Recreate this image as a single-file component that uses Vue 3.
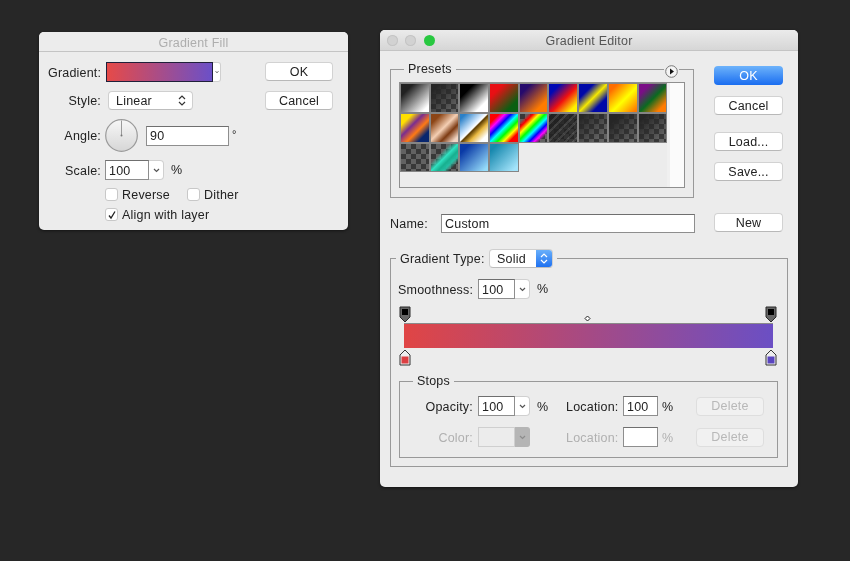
<script setup>
const check = 'conic-gradient(#626262 25%, #383838 0 50%, #626262 0 75%, #383838 0) 0 0 / 10px 10px'
const swatches = [
  'linear-gradient(135deg, #222 22%, #fff 88%)',
  `linear-gradient(135deg, #262626 15%, rgba(38,38,38,0) 90%), ${check}`,
  'linear-gradient(135deg, #000 25%, #fff 78%)',
  'linear-gradient(135deg, #e80f14 24%, #0a5f12 78%)',
  'linear-gradient(135deg, #260a6c 20%, #ff7b00 78%)',
  'linear-gradient(135deg, #0008b4 20%, #f01010 54%, #fff000 86%)',
  'linear-gradient(135deg, #0008a8 26%, #f5e800 50%, #0008a8 74%)',
  'linear-gradient(135deg, #ff6e00 15%, #ffff00 55%, #ff7a00 95%)',
  'linear-gradient(135deg, #7a0e86 20%, #0a6a20 52%, #ff7b00 84%)',
  'linear-gradient(135deg, #ffe000 20%, #7a2c90 40%, #ff7a14 60%, #08266e 80%)',
  'linear-gradient(135deg, #8c4516 18%, #f4cfb4 48%, #7c3a12 68%, #f2d6c4 90%)',
  'linear-gradient(135deg, #2a80c8 10%, #d8ecff 42%, #fff 48%, #5a3a00 52%, #e8b840 66%, #fff 86%)',
  'linear-gradient(135deg, #f00 16%, #f0f 27%, #00f 38%, #0ff 50%, #0f0 62%, #ff0 73%, #f00 84%)',
  `linear-gradient(135deg, rgba(255,0,0,0) 14%, #f00 24%, #ff0 35%, #0f0 46%, #0ff 56%, #00f 67%, #f0f 76%, rgba(255,0,255,0) 86%), ${check}`,
  `repeating-linear-gradient(135deg, rgba(120,120,120,.22) 0 2px, rgba(20,20,20,.35) 2px 6px), linear-gradient(135deg, #262626, rgba(38,38,38,.3)), ${check}`,
  `linear-gradient(135deg, #262626 10%, rgba(38,38,38,0) 80%), ${check}`,
  `linear-gradient(135deg, #262626 20%, rgba(38,38,38,0) 90%), ${check}`,
  `linear-gradient(135deg, #262626 15%, rgba(38,38,38,0) 85%), ${check}`,
  check,
  `linear-gradient(135deg, rgba(40,220,190,0) 34%, #30e0c0 50%, #18b090 62%, rgba(30,200,170,.9) 72%, rgba(30,200,170,0) 84%), ${check}`,
  'linear-gradient(135deg, #0a3aa6 18%, #96dcfa 92%)',
  'linear-gradient(135deg, #1788ae 14%, #a4e4fb 90%)',
]
</script>

<template>
  <main class="desktop">
    <!-- Gradient Fill -->
    <section class="window fill-window">
      <header class="titlebar fill-title">Gradient Fill</header>
      <div class="fill-body">
        <div class="fill-form">
          <div class="fill-row r-grad">
            <span class="lbl">Gradient:</span>
            <div class="grad-pick">
              <div class="grad-swatch"></div>
              <div class="grad-arrow">
                <svg width="4" height="4" viewBox="0 0 4 4"><path d="M.5 1 2 3l1.500-2" fill="none" stroke="#666" stroke-width=".8"/></svg>
              </div>
            </div>
          </div>
          <div class="fill-row r-style">
            <span class="lbl">Style:</span>
            <div class="select linear">
              <span>Linear</span>
              <svg class="updown" width="8" height="11" viewBox="0 0 8 11"><path d="M1 4 4 1l3 3M1 7l3 3 3-3" fill="none" stroke="#333" stroke-width="1.200"/></svg>
            </div>
          </div>
          <div class="fill-row r-angle">
            <span class="lbl">Angle:</span>
            <svg class="dial" width="33" height="33" viewBox="0 0 33 33">
              <defs>
                <linearGradient id="dialfill" x1="0" y1="0" x2="0" y2="1">
                  <stop offset="0" stop-color="#f7f7f7"/>
                  <stop offset="1" stop-color="#d6d6d6"/>
                </linearGradient>
              </defs>
              <circle cx="16.500" cy="16.500" r="15.800" fill="url(#dialfill)" stroke="#9a9a9a" stroke-width="1.200"/>
              <path d="M16.500 1.500V17" stroke="#9a9a9a" stroke-width="1"/>
              <circle cx="16.500" cy="16.500" r="1" fill="#777"/>
            </svg>
            <div class="field angle-field">90</div>
            <span class="degree">°</span>
          </div>
          <div class="fill-row r-scale">
            <span class="lbl">Scale:</span>
            <div class="combo">
              <div class="field combo-field scale-field">100</div>
              <div class="combo-drop">
                <svg width="7" height="5" viewBox="0 0 7 5"><path d="M1 1l2.500 2.500L6 1" fill="none" stroke="#555" stroke-width="1.200"/></svg>
              </div>
            </div>
            <span class="pct">%</span>
          </div>
          <div class="checks r-checks">
            <label class="chk chk-reverse"><span class="box"></span><span class="chk-text">Reverse</span></label>
            <label class="chk"><span class="box"></span><span class="chk-text">Dither</span></label>
          </div>
          <div class="checks r-align">
            <label class="chk">
              <span class="box">
                <svg width="10" height="10" viewBox="0 0 10 10"><path d="M2 5.500 4 8l4-6.500" fill="none" stroke="#222" stroke-width="1.300"/></svg>
              </span><span class="chk-text">Align with layer</span>
            </label>
          </div>
        </div>
        <div class="fill-actions">
          <button class="btn">OK</button>
          <button class="btn">Cancel</button>
        </div>
      </div>
    </section>

    <!-- Gradient Editor -->
    <section class="window editor-window">
      <header class="titlebar editor-title">
        <div class="lights">
          <i class="light"></i><i class="light"></i><i class="light green"></i>
        </div>
        Gradient Editor
      </header>
      <div class="editor-top">
        <div class="editor-main">
          <fieldset class="group presets">
            <legend class="presets-legend">Presets</legend>
            <span class="menu-btn">
              <svg width="13" height="13" viewBox="0 0 13 13">
                <circle cx="6.500" cy="6.500" r="5.800" fill="#f4f4f4" stroke="#777"/>
                <path d="M5 3.500 9 6.500 5 9.500z" fill="#111"/>
              </svg>
            </span>
            <div class="preset-box">
              <div class="preset-grid">
                <div v-for="(s, i) in swatches" :key="i" class="swatch" :style="{ background: s }"></div>
              </div>
              <div class="preset-track"></div>
            </div>
          </fieldset>
          <div class="name-row">
            <span class="name-lbl">Name:</span>
            <div class="field name-field">Custom</div>
          </div>
        </div>
        <div class="editor-actions">
          <button class="btn primary">OK</button>
          <button class="btn b-cancel">Cancel</button>
          <button class="btn b-load">Load...</button>
          <button class="btn b-save">Save...</button>
          <button class="btn b-new">New</button>
        </div>
      </div>

      <fieldset class="group type-group">
        <legend class="type-legend">
          <span class="type-lbl">Gradient Type:</span>
          <div class="select solid">
            <span>Solid</span>
            <span class="blue-cap">
              <svg width="8" height="11" viewBox="0 0 8 11"><path d="M1 4 4 1l3 3M1 7l3 3 3-3" fill="none" stroke="#fff" stroke-width="1.200"/></svg>
            </span>
          </div>
        </legend>
        <div class="smooth-row">
          <span class="smooth-lbl">Smoothness:</span>
          <div class="combo">
            <div class="field combo-field">100</div>
            <div class="combo-drop">
              <svg width="7" height="5" viewBox="0 0 7 5"><path d="M1 1l2.500 2.500L6 1" fill="none" stroke="#555" stroke-width="1.200"/></svg>
            </div>
          </div>
          <span class="pct">%</span>
        </div>
        <div class="ramp">
          <div class="ramp-bar"></div>
          <svg class="stop stop-tl" width="12" height="17" viewBox="0 0 12 17"><path d="M1 1h10v10l-5 5-5-5z" fill="#666" stroke="#2a2a2a"/><path d="M3 3h6v6H3z" fill="#000"/></svg>
          <svg class="stop stop-tr" width="12" height="17" viewBox="0 0 12 17"><path d="M1 1h10v10l-5 5-5-5z" fill="#666" stroke="#2a2a2a"/><path d="M3 3h6v6H3z" fill="#000"/></svg>
          <svg class="diamond" width="7" height="7" viewBox="0 0 7 7"><path d="M3.500 1 6 3.500 3.500 6 1 3.500z" fill="#fff" stroke="#222"/></svg>
          <svg class="stop stop-bl" width="12" height="17" viewBox="0 0 12 17"><path d="M6 1l5 5v10H1V6z" fill="#eee" stroke="#333"/><path d="M2.500 7.500h7v7h-7z" fill="#dc3f42"/></svg>
          <svg class="stop stop-br" width="12" height="17" viewBox="0 0 12 17"><path d="M6 1l5 5v10H1V6z" fill="#eee" stroke="#333"/><path d="M2.500 7.500h7v7h-7z" fill="#5a45c0"/></svg>
        </div>
        <fieldset class="group stops">
          <legend class="stops-legend">Stops</legend>
          <div class="stops-grid">
            <span class="s-lbl">Opacity:</span>
            <div class="combo">
              <div class="field combo-field">100</div>
              <div class="combo-drop">
                <svg width="7" height="5" viewBox="0 0 7 5"><path d="M1 1l2.500 2.500L6 1" fill="none" stroke="#555" stroke-width="1.200"/></svg>
              </div>
            </div>
            <span class="s-pct">%</span>
            <span class="s-lbl">Location:</span>
            <div class="field loc-field">100</div>
            <span class="s-pct2">%</span>
            <button class="btn disabled">Delete</button>

            <span class="s-lbl muted">Color:</span>
            <div class="combo">
              <div class="color-well"></div>
              <div class="color-drop">
                <svg width="7" height="5" viewBox="0 0 7 5"><path d="M1 1l2.500 2.500L6 1" fill="none" stroke="#8c8c8c" stroke-width="1.200"/></svg>
              </div>
            </div>
            <span></span>
            <span class="s-lbl muted">Location:</span>
            <div class="field loc-field"></div>
            <span class="s-pct2 muted">%</span>
            <button class="btn disabled">Delete</button>
          </div>
        </fieldset>
      </fieldset>
    </section>
  </main>
</template>

<style scoped>
.desktop {
  position: relative;
  width: 850px;
  height: 561px;
  overflow: hidden;
  background: #272727;
  font: 12.5px/14px "Liberation Sans", Arial, sans-serif;
  letter-spacing: .2px;
  color: #222;
}
.window {
  position: absolute;
  box-sizing: border-box;
  background: #ececec;
  border-radius: 5px;
  box-shadow: 0 1px 3px rgba(0, 0, 0, .5);
  filter: blur(.35px);
}
.fill-window { left: 39px; top: 32px; width: 309px; height: 198px; }
.editor-window { left: 380px; top: 30px; width: 418px; height: 457px; }

.titlebar {
  box-sizing: border-box;
  text-align: center;
  border-radius: 5px 5px 0 0;
  border-bottom: 1px solid #c4c4c4;
}
.fill-title {
  height: 20px;
  line-height: 22px;
  color: #aeaeae;
  background: #ececec;
}
.editor-title {
  position: relative;
  height: 21px;
  line-height: 23px;
  color: #555;
  background: linear-gradient(#ebebeb, #d6d6d6);
}
.lights {
  position: absolute;
  left: 7px;
  top: 5px;
  display: flex;
  gap: 7px;
}
.light {
  width: 11px;
  height: 11px;
  border-radius: 50%;
  background: #d2d2d2;
  box-shadow: inset 0 0 0 1px #c4c4c4;
}
.light.green { margin-left: 1px; background: #28c840; box-shadow: none; }

/* fill dialog */
.fill-body {
  display: flex;
  padding: 10px 0 0 9px;
}
.fill-form { width: 217px; }
.fill-row { display: flex; align-items: center; }
.lbl { width: 53px; margin-right: 4px; padding-top: 1px; text-align: right; flex: none; }
.r-style .lbl { padding-top: 0; }
.r-grad { height: 20px; }
.r-style { height: 19px; margin-top: 9px; }
.r-angle { height: 33px; margin-top: 9px; }
.r-scale { height: 20px; margin-top: 8px; }
.r-checks { margin-top: 8px; }
.r-align { margin-top: 7px; }
.grad-pick { display: flex; margin-left: 1px; height: 20px; }
.grad-swatch {
  box-sizing: border-box;
  width: 107px;
  border: 1px solid #20203a;
  background: linear-gradient(90deg, #e64a48, #6b50c8);
}
.grad-arrow {
  box-sizing: border-box;
  width: 8px;
  display: flex;
  align-items: center;
  justify-content: center;
  background: #fff;
  border: 1px solid #d0d0d0;
  border-left: 0;
  border-radius: 0 3px 3px 0;
}
.select {
  box-sizing: border-box;
  display: flex;
  align-items: center;
  height: 19px;
  background: #fff;
  border: 1px solid #cfcfcf;
  border-bottom-color: #bdbdbd;
  border-radius: 4px;
}
.linear {
  width: 85px;
  margin-left: 3px;
  padding: 0 6px 0 7px;
  justify-content: space-between;
}
.dial { flex: none; }
.field {
  box-sizing: border-box;
  background: #fff;
  border: 1px solid #8e8e8e;
  border-top-color: #6f6f6f;
  padding-left: 3px;
  height: 20px;
  line-height: 20px;
}
.angle-field { width: 83px; margin-left: 8px; line-height: 19px; }
.degree { margin-left: 3px; margin-top: -3px; font-size: 11px; }
.combo { display: flex; height: 20px; }
.combo-field { width: 37px; }
.scale-field { width: 44px; }
.combo-drop, .color-drop {
  box-sizing: border-box;
  width: 15px;
  display: flex;
  align-items: center;
  justify-content: center;
  background: #fff;
  border: 1px solid #d0d0d0;
  border-left: 0;
  border-radius: 0 4px 4px 0;
}
.pct { margin-left: 7px; }
.checks { display: flex; padding-left: 57px; }
.chk { display: flex; align-items: center; height: 13px; }
.chk-reverse { width: 82px; }
.chk-text { padding-top: 1px; }
.box {
  box-sizing: border-box;
  width: 13px;
  height: 13px;
  margin-right: 4px;
  background: #fff;
  border: 1px solid #c8c8c8;
  border-radius: 3px;
  display: flex;
  align-items: center;
  justify-content: center;
}
.fill-actions { width: 68px; }
.fill-actions .btn + .btn { margin-top: 10px; }

.btn {
  display: block;
  box-sizing: border-box;
  width: 68px;
  height: 19px;
  padding: 0;
  font: inherit;
  line-height: 16px;
  letter-spacing: .2px;
  color: #222;
  background: #fff;
  border: 1px solid #d2d2d2;
  border-bottom-color: #b8b8b8;
  border-radius: 4px;
}
.btn.primary {
  color: #fff;
  border: 0;
  background: linear-gradient(#6db3fb, #1a6df0);
}
.btn.disabled {
  color: #b8b8b8;
  background: #f1f1f1;
  border-color: #dedede;
}

/* editor */
.editor-top { display: flex; padding: 11px 0 0 10px; }
.editor-main { width: 305px; }
.group {
  box-sizing: border-box;
  margin: 0;
  padding: 0;
  min-width: 0;
  border: 1px solid #999;
  position: relative;
}
.presets { width: 304px; padding-bottom: 9px; }
.presets-legend { margin-left: 13px; padding: 0 4px; }
.menu-btn {
  position: absolute;
  right: 14px;
  top: -12px;
  width: 15px;
  height: 15px;
  display: flex;
  align-items: center;
  justify-content: center;
  background: #ececec;
}
.preset-box {
  box-sizing: border-box;
  display: flex;
  width: 286px;
  height: 106px;
  margin: 6px 0 0 8px;
  border: 1px solid #8f8f8f;
  background: #ececec;
}
.preset-grid {
  width: 267.300px;
  display: grid;
  grid-template-columns: repeat(9, 29.700px);
  grid-auto-rows: 29.800px;
  align-content: start;
  flex: none;
}
.swatch { box-sizing: border-box; border: 1px solid #858585; }
.preset-track {
  flex: 1;
  border-left: 3px solid #f0f0f0;
  background: #fbfbfb;
}
.name-row { display: flex; align-items: center; margin-top: 16px; }
.name-lbl { width: 51px; flex: none; }
.name-field { width: 254px; height: 19px; line-height: 18px; }
.editor-actions { margin: 4px 0 0 19px; width: 69px; }
.editor-actions .btn { width: 69px; }
.b-cancel { margin-top: 11px; }
.b-load { margin-top: 17px; }
.b-save { margin-top: 11px; }
.b-new { margin-top: 32px; }

.type-group { width: 398px; height: 218px; margin: 16px 0 0 10px; }
.type-legend {
  display: flex;
  align-items: center;
  height: 19px;
  margin-left: 5px;
  padding: 0 4px;
}
.type-lbl { width: 89px; padding-top: 1px; }
.solid {
  width: 64px;
  padding-left: 7px;
  justify-content: space-between;
  overflow: hidden;
}
.blue-cap {
  width: 16px;
  height: 19px;
  display: flex;
  align-items: center;
  justify-content: center;
  background: linear-gradient(#6db3fb, #1a6df0);
}
.smooth-row { display: flex; align-items: center; margin: 11px 0 0 7px; }
.smooth-lbl { width: 80px; flex: none; padding-top: 1px; }
.ramp { position: relative; height: 60px; margin-top: 7px; }
.ramp-bar {
  position: absolute;
  left: 13px;
  top: 17px;
  width: 369px;
  height: 25px;
  box-sizing: border-box;
  border-top: 1px solid #8a8a8a;
  background: linear-gradient(90deg, #e04545, #6b4fc4);
}
.stop { position: absolute; }
.stop-tl { left: 8px; top: 0; }
.stop-tr { left: 374px; top: 0; }
.stop-bl { left: 8px; top: 43px; }
.stop-br { left: 374px; top: 43px; }
.diamond { position: absolute; left: 193px; top: 9px; }

.stops { width: 379px; margin: 8px 0 0 8px; height: 84px; }
.stops-legend { margin-left: 13px; padding: 0 4px; }
.stops-grid {
  display: grid;
  grid-template-columns: 78px 52px 36px 57px 35px 38px 68px;
  row-gap: 11px;
  align-items: center;
  margin-top: 8px;
}
.s-lbl { text-align: right; padding: 1px 5px 0 0; }
.s-pct { padding: 1px 0 0 7px; }
.s-pct2 { padding: 1px 0 0 4px; }
.muted { color: #b0b0b0; }
.color-well {
  box-sizing: border-box;
  width: 37px;
  background: #ececec;
  border: 1px solid #cfcfcf;
}
.color-drop { background: #b5b5b5; border-color: #b5b5b5; border-radius: 0 3px 3px 0; }
</style>

<style>
html, body { background: #272727; }
</style>
